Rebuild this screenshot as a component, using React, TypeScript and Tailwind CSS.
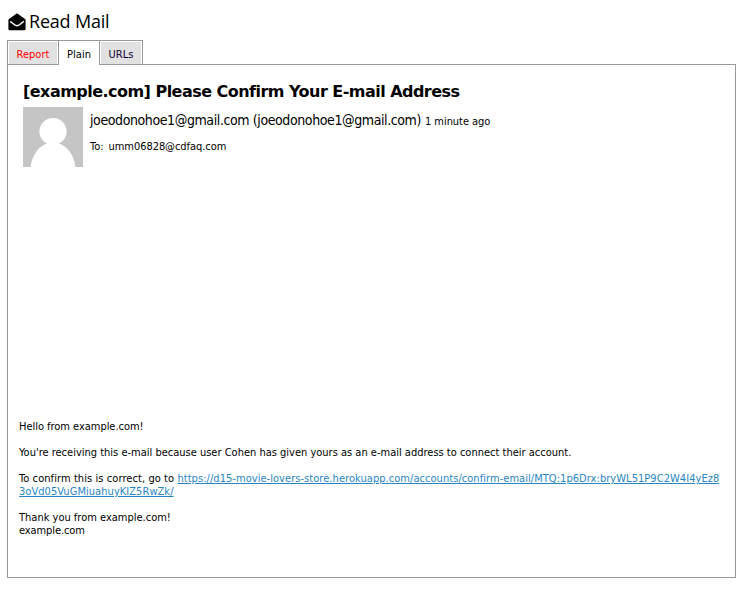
function Tab({ label, className }: { label: string; className: string }) {
  return (
    <div className="h-full border-t border-r border-[#999] p-px">
      <div className={`flex h-[22px] items-center justify-center ${className}`}>{label}</div>
    </div>
  );
}

function EnvelopeOpen() {
  return (
    <svg viewBox="0 0 18 18" className="mr-[3px] h-[18px] w-[18px]">
      <path d="M9 .3 17 6Q17.6 6.5 17.6 7.3V16Q17.6 17.2 16.4 17.2H1.6Q.4 17.2.4 16V7.3Q.4 6.5 1 6Z" fill="#000" />
      <path d="M2.2 8.4 7.2 12.2Q9 13.4 10.8 12.2L15.8 8.4" fill="none" stroke="#fff" strokeWidth="1.4" />
    </svg>
  );
}

function Avatar() {
  return (
    <svg viewBox="0 0 60 60" className="size-[60px] shrink-0">
      <rect width="60" height="60" fill="#c5c5c5" />
      <circle cx="30" cy="24.5" r="13.6" fill="#fff" />
      <path d="M7.5 60C9 48 16 39 24 36.5H36C44 39 51 48 52.5 60Z" fill="#fff" />
    </svg>
  );
}

export default function App() {
  return (
    <main className="h-[589px] w-[743px] bg-white pl-[7px] font-['DejaVu_Sans_Condensed','Noto_Sans',sans-serif] text-[11px] leading-[13px] text-black">
      <h1 className="flex h-10 items-center pt-[3px] pl-px font-['Open_Sans','Noto_Sans',sans-serif] text-[18px] leading-6 tracking-[-0.2px]">
        <EnvelopeOpen />
        <span className="-mt-0.5">Read Mail</span>
      </h1>
      <div className="-mb-px flex h-[25px]">
        <div className="flex border-l border-[#999]">
          <Tab label="Report" className="w-12 bg-[#e1e1e1] pt-0.5 text-[#f00]" />
        </div>
        <div className="relative h-[25px] border-t border-r border-[#999] bg-white">
          <div className="flex h-[24px] w-10 items-center justify-center pt-0.5">Plain</div>
        </div>
        <Tab label="URLs" className="w-10 bg-[#e1e1e1] pt-0.5 text-[#103]" />
      </div>
      <section className="h-[514px] w-[729px] border border-[#999] pr-[15px] pl-[11px]">
        <header className="h-[355px] pt-4 pl-1">
          <h2 className="font-['DejaVu_Sans',sans-serif] text-[16px] leading-[22px] font-bold tracking-[-0.53px]">
            [example.com] Please Confirm Your E-mail Address
          </h2>
          <div className="flex gap-[7px] pt-1">
            <Avatar />
            <div>
              <p className="flex h-[27px] items-baseline pt-[3px]">
                <span className="text-[14px] leading-[20px] tracking-[-0.4px]">
                  joeodonohoe1@gmail.com (joeodonohoe1@gmail.com)
                </span>
                <span className="ml-1 tracking-[-0.05px]">1 minute ago</span>
              </p>
              <p className="pt-[6px]">
                To:<span className="ml-[5px] tracking-[-0.06px]">umm06828@cdfaq.com</span>
              </p>
            </div>
          </div>
        </header>
        <div className="whitespace-nowrap">
          <p className="tracking-[-0.03px]">Hello from example.com!</p>
          <p className="pt-[13px]">
            You're receiving this e-mail because user Cohen has given yours as an e-mail address to connect their account.
          </p>
          <p className="pt-[13px]">
            <span className="tracking-[0.08px]">To confirm this is correct, go to </span>
            <a className="tracking-[0.05px] text-[#2a85c4] underline">
              https://d15-movie-lovers-store.herokuapp.com/accounts/confirm-email/MTQ:1p6Drx:bryWL51P9C2W4I4yEz8
              <br />
              3oVd05VuGMiuahuyKIZ5RwZk/
            </a>
          </p>
          <p className="pt-[13px]">Thank you from example.com!</p>
          <p className="tracking-[-0.1px]">example.com</p>
        </div>
      </section>
    </main>
  );
}
